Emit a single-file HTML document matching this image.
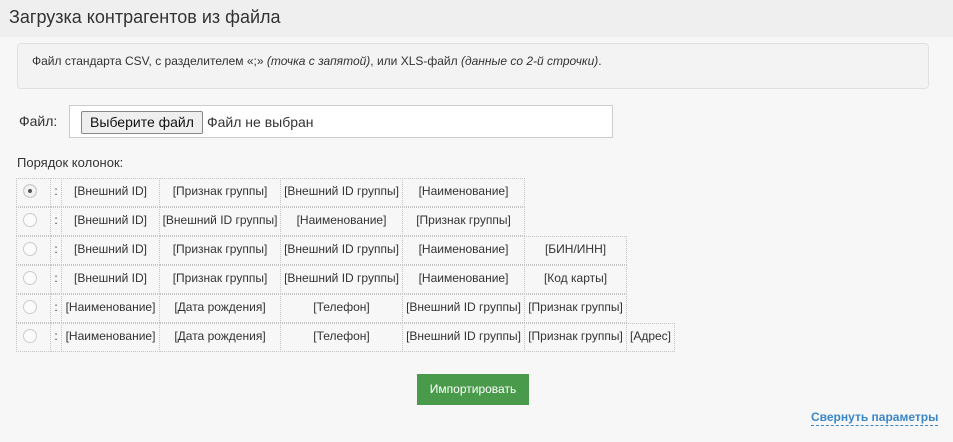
<!DOCTYPE html>
<html><head><meta charset="utf-8"><style>
body{margin:0;width:953px;height:442px;background:#f7f7f7;font-family:"Liberation Sans",sans-serif;color:#333;position:relative;overflow:hidden}
.hdr{position:absolute;left:0;top:0;width:953px;height:37px;background:#efefef;}
.hdr span{position:absolute;left:9px;top:7px;font-size:18px;color:#333}
.info{position:absolute;left:17px;top:43px;width:912px;height:46px;background:#f3f3f3;border:1px solid #e0e0e0;border-radius:4px;box-sizing:border-box}
.info span{position:absolute;left:14px;top:10px;font-size:12px}
.lbl{position:absolute;left:19px;top:113px;font-size:14px}
.fin{position:absolute;left:69px;top:105px;width:544px;height:33px;border:1px solid #ccc;background:#fff;box-sizing:border-box}
.fbtn{position:absolute;left:11px;top:5px;width:122px;height:23px;border:1px solid #888;background:#efefef;border-radius:2px;box-sizing:border-box;font-size:14px;text-align:center;line-height:21px;color:#111}
.fnone{position:absolute;left:137px;top:6px;font-size:14px;line-height:20px;color:#333}
.ord{position:absolute;left:17px;top:155px;font-size:13px}
.c{position:absolute;height:29px;border:1px dotted #c4c4c4;box-sizing:border-box;font-size:12px;text-align:center;line-height:24px;white-space:nowrap;margin-left:-1px}
.r{position:absolute;left:23px;width:14px;height:14px;border-radius:50%;border:1px solid #ccc;background:#fbfbfb;box-sizing:border-box}
.btn{position:absolute;left:417px;top:374px;width:112px;height:31px;background:#4a9a4c;color:#fff;font-size:12px;text-align:center;line-height:30px}
.lnk{position:absolute;left:811px;top:410px;font-size:12px;font-weight:bold;color:#3a87c8;border-bottom:1px dashed #3a87c8;line-height:15px}
</style></head><body>
<div class="hdr"><span>Загрузка контрагентов из файла</span></div>
<div class="info"><span>Файл стандарта CSV, с разделителем «;» <i>(точка с запятой)</i>, или XLS-файл <i>(данные со 2-й строчки)</i>.</span></div>
<div class="lbl">Файл:</div>
<div class="fin"><div class="fbtn">Выберите файл</div><div class="fnone">Файл не выбран</div></div>
<div class="ord">Порядок колонок:</div>
<div id="t"></div>
<div class="btn">Импортировать</div>
<div class="lnk">Свернуть параметры</div>
<script>
var xs=[17,51,62,160,281,403,525,627,675];
var rows=[
["[Внешний ID]","[Признак группы]","[Внешний ID группы]","[Наименование]"],
["[Внешний ID]","[Внешний ID группы]","[Наименование]","[Признак группы]"],
["[Внешний ID]","[Признак группы]","[Внешний ID группы]","[Наименование]","[БИН/ИНН]"],
["[Внешний ID]","[Признак группы]","[Внешний ID группы]","[Наименование]","[Код карты]"],
["[Наименование]","[Дата рождения]","[Телефон]","[Внешний ID группы]","[Признак группы]"],
["[Наименование]","[Дата рождения]","[Телефон]","[Внешний ID группы]","[Признак группы]","[Адрес]"]];
var h="";
rows.forEach(function(r,i){var y=178+i*29;
var cells=["",":"].concat(r);
cells.forEach(function(t,j){h+='<div class="c" style="left:'+xs[j]+'px;top:'+y+'px;width:'+(xs[j+1]-xs[j]+1)+'px">'+t+'</div>';});
h+='<div class="r" style="top:'+(y+6)+'px'+(i==0?';box-shadow:inset 0 0 0 4px #f3f3f3;background:#555':'')+'"></div>';
});
document.getElementById('t').innerHTML=h;
</script>
</body></html>
